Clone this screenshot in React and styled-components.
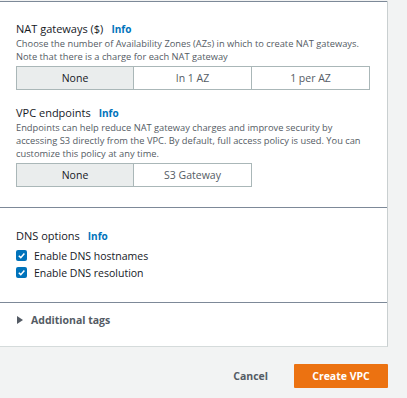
import React from 'react';
import styled, { createGlobalStyle } from 'styled-components';

const GlobalStyle = createGlobalStyle`
  html, body {
    margin: 0;
    padding: 0;
    background: #f2f3f3;
    font-family: "Open Sans", "Noto Sans", sans-serif;
    color: #16191f;
  }
`;

const Page = styled.div`
  width: 407px;
  height: 398px;
  padding-top: 1px;
  box-sizing: border-box;
`;

const Panel = styled.div`
  width: 389px;
  margin-left: -1px;
  background: #fff;
  border-right: 1px solid #c9cfd0;
  border-bottom: 1px solid #d5dbdb;
  box-sizing: border-box;
`;

const Section = styled.div`
  border-top: 1px solid #7d8998;
  padding: ${({ pad }) => pad};
`;

const Heading = styled.div`
  display: flex;
  align-items: center;
  gap: 8px;
  font-size: 11px;
  line-height: 16px;
  margin-top: ${({ top }) => top || 0}px;
`;

const Info = styled.span`
  color: #0073bb;
  font-weight: 700;
  font-size: 10px;
`;

const Desc = styled.p`
  margin: 0;
  font-size: 9.3px;
  line-height: 13px;
  color: #545b64;
  white-space: nowrap;
`;

const Segments = styled.div`
  display: grid;
  grid-template-columns: repeat(${({ count }) => count}, 118px);
  margin-top: 3px;
`;

const Segment = styled.div`
  height: 24px;
  box-sizing: border-box;
  border: 1px solid #aab7b8;
  margin-left: -1px;
  display: flex;
  align-items: center;
  justify-content: center;
  font-size: 10.5px;
  color: ${({ selected }) => (selected ? '#16191f' : '#545b64')};
  background: ${({ selected }) => (selected ? '#eaeded' : '#fff')};
  &:first-child {
    margin-left: 0;
  }
`;

const CheckList = styled.div`
  margin-top: 3px;
`;

const CheckRow = styled.label`
  display: flex;
  align-items: center;
  gap: 7px;
  height: 17px;
  font-size: 10.5px;
`;

const Box = styled.span`
  width: 11px;
  height: 11px;
  border-radius: 2px;
  background: #0073bb;
  display: flex;
  align-items: center;
  justify-content: center;
`;

const Expander = styled.div`
  display: flex;
  align-items: center;
  gap: 8px;
  height: 16px;
  font-size: 10.5px;
  font-weight: 700;
  color: #545b64;
  padding-left: 1px;
`;

const Triangle = styled.span`
  width: 0;
  height: 0;
  border-top: 4px solid transparent;
  border-bottom: 4px solid transparent;
  border-left: 6px solid #545b64;
`;

const Footer = styled.div`
  display: flex;
  justify-content: flex-end;
  align-items: center;
  gap: 26px;
  width: 388px;
  margin-top: 17px;
`;

const CancelButton = styled.button`
  border: none;
  background: none;
  font-family: inherit;
  font-size: 10.5px;
  font-weight: 700;
  color: #545b64;
  padding: 0;
`;

const PrimaryButton = styled.button`
  width: 94px;
  height: 24px;
  border: none;
  border-radius: 1px;
  background: #ec7211;
  color: #fff;
  font-family: inherit;
  font-size: 10.5px;
  font-weight: 700;
`;

const Check = () => (
  <Box>
    <svg width="9" height="9" viewBox="0 0 10 10">
      <path d="M2 5.2 L4.2 7.4 L8.2 2.8" fill="none" stroke="#fff" strokeWidth="1.7" />
    </svg>
  </Box>
);

export default function App() {
  return (
    <Page>
      <GlobalStyle />
      <Panel>
        <Section pad="19px 16px 20px 17px">
          <Heading>
            NAT gateways ($) <Info>Info</Info>
          </Heading>
          <Desc>
            Choose the number of Availability Zones (AZs) in which to create NAT gateways.
            <br />
            Note that there is a charge for each NAT gateway
          </Desc>
          <Segments count={3}>
            <Segment selected>None</Segment>
            <Segment>In 1 AZ</Segment>
            <Segment>1 per AZ</Segment>
          </Segments>
          <Heading top={15}>
            VPC endpoints <Info>Info</Info>
          </Heading>
          <Desc>
            Endpoints can help reduce NAT gateway charges and improve security by
            <br />
            accessing S3 directly from the VPC. By default, full access policy is used. You can
            <br />
            customize this policy at any time.
          </Desc>
          <Segments count={2}>
            <Segment selected>None</Segment>
            <Segment>S3 Gateway</Segment>
          </Segments>
        </Section>
        <Section pad="20px 16px 21px 17px">
          <Heading>
            DNS options <Info>Info</Info>
          </Heading>
          <CheckList>
            <CheckRow>
              <Check /> Enable DNS hostnames
            </CheckRow>
            <CheckRow>
              <Check /> Enable DNS resolution
            </CheckRow>
          </CheckList>
        </Section>
        <Section pad="9px 16px 18px 17px">
          <Expander>
            <Triangle /> Additional tags
          </Expander>
        </Section>
      </Panel>
      <Footer>
        <CancelButton>Cancel</CancelButton>
        <PrimaryButton>Create VPC</PrimaryButton>
      </Footer>
    </Page>
  );
}
